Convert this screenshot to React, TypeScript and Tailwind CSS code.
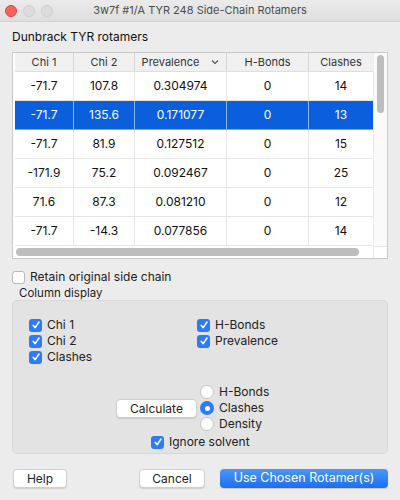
import React from 'react';

type Row = { chi1: string; chi2: string; prev: string; hb: string; cl: string };

const rows: Row[] = [
  { chi1: '-71.7', chi2: '107.8', prev: '0.304974', hb: '0', cl: '14' },
  { chi1: '-71.7', chi2: '135.6', prev: '0.171077', hb: '0', cl: '13' },
  { chi1: '-71.7', chi2: '81.9', prev: '0.127512', hb: '0', cl: '15' },
  { chi1: '-171.9', chi2: '75.2', prev: '0.092467', hb: '0', cl: '25' },
  { chi1: '71.6', chi2: '87.3', prev: '0.081210', hb: '0', cl: '12' },
  { chi1: '-71.7', chi2: '-14.3', prev: '0.077856', hb: '0', cl: '14' },
];

const colW = ['w-[59px]', 'w-[61px]', 'w-[92px]', 'w-[82px]', 'w-[64px]'];

const Check = ({ on }: { on: boolean }) =>
  on ? (
    <span className="flex h-[13px] w-[13px] shrink-0 items-center justify-center rounded-[3px] bg-[#2d7cf6]">
      <svg width="10" height="10" viewBox="0 0 10 10">
        <path d="M2.2 5.3 L4.2 7.7 L8 2" fill="none" stroke="white" strokeWidth="1.5" strokeLinecap="round" strokeLinejoin="round" />
      </svg>
    </span>
  ) : (
    <span className="h-[13px] w-[13px] shrink-0 rounded-[3px] border border-[#b9b9b9] bg-white" />
  );

const CheckRow = ({ on, label }: { on: boolean; label: string }) => (
  <div className="flex h-[16px] items-center gap-[5px]">
    <Check on={on} />
    <span>{label}</span>
  </div>
);

const Radio = ({ on, label }: { on: boolean; label: string }) => (
  <div className="flex h-[16px] items-center gap-[5px]">
    {on ? (
      <span className="flex h-[14px] w-[14px] items-center justify-center rounded-full bg-[#2d7cf6]">
        <span className="h-[5px] w-[5px] rounded-full bg-white" />
      </span>
    ) : (
      <span className="h-[14px] w-[14px] rounded-full border border-[#c4c4c4] bg-white" />
    )}
    <span>{label}</span>
  </div>
);

export default function App() {
  return (
    <div className="h-[500px] w-[400px] bg-[#ececec] text-[12px] text-[#222] [font-family:Inter,'Liberation_Sans',sans-serif]">
      {/* title bar */}
      <div className="grid h-[22px] grid-cols-[60px_1fr_60px] items-center border-b border-[#d2d2d2] bg-gradient-to-b from-[#ebebeb] to-[#dedede]">
        <div className="flex items-center gap-[6px] pl-[5px]">
          <span className="h-[12px] w-[12px] rounded-full border border-[#e0443e] bg-[#fc605c]" />
          <span className="h-[12px] w-[12px] rounded-full border border-[#cfcfcf] bg-[#dcdcdc]" />
          <span className="h-[12px] w-[12px] rounded-full border border-[#cfcfcf] bg-[#dcdcdc]" />
        </div>
        <div className="text-center text-[11px] text-[#4d4d4d]">3w7f #1/A TYR 248 Side-Chain Rotamers</div>
        <div />
      </div>

      <div className="px-[12px]">
        <div className="flex h-[29px] items-end pb-[5px] text-[12px] text-[#111]">Dunbrack TYR rotamers</div>

        {/* table */}
        <div className="mt-[1px] flex h-[207px] border border-[#c9c9c9] bg-white pl-[2px]">
          <div className="flex w-[358px] flex-col">
            <div className="flex h-[19px] border-b border-[#dedede] bg-[#f0f0f0] text-[11px] text-[#333]">
              {['Chi 1', 'Chi 2', 'Prevalence', 'H-Bonds', 'Clashes'].map((h, i) => (
                <div key={h} className={`${colW[i]} flex items-center justify-center gap-[12px] border-r border-[#d6d6d6] last:border-r-0`}>
                  <span>{h}</span>
                  {h === 'Prevalence' && (
                    <svg width="8" height="6" viewBox="0 0 8 6">
                      <path d="M1 1.5 L4 4.5 L7 1.5" fill="none" stroke="#555" strokeWidth="1.2" />
                    </svg>
                  )}
                </div>
              ))}
            </div>
            {rows.map((r, ri) => {
              const sel = ri === 1;
              return (
                <div
                  key={ri}
                  className={`flex h-[29px] border-b ${sel ? 'border-[#7aa7ee] bg-[#0b5fdd] text-white' : 'border-[#e6e6e6] text-[#111]'}`}
                >
                  {[r.chi1, r.chi2, r.prev, r.hb, r.cl].map((v, i) => (
                    <div
                      key={i}
                      className={`${colW[i]} flex items-center justify-center border-r last:border-r-0 ${sel ? 'border-[#8fb5f0]' : 'border-[#e6e6e6]'}`}
                    >
                      {v}
                    </div>
                  ))}
                </div>
              );
            })}
            <div className="flex h-[12px] items-center pl-[1px]">
              <div className="h-[8px] w-[343px] rounded-full bg-[#bdbdbd]" />
            </div>
          </div>
          <div className="flex w-[14px] flex-col border-l border-[#ececec] bg-[#fafafa]">
            <div className="flex-1 pl-[3px] pt-[2px]">
              <div className="h-[58px] w-[7px] rounded-full bg-[#bdbdbd]" />
            </div>
            <div className="h-[12px] border-t border-[#e4e4e4] bg-white" />
          </div>
        </div>

        <div className="mt-[10px] flex h-[16px] items-center gap-[5px]">
          <Check on={false} />
          <span>Retain original side chain</span>
        </div>

        <div className="mt-[2px] pl-[7px] text-[11.5px] leading-[13px]">Column display</div>

        {/* group */}
        <div className="h-[154px] rounded-[5px] border border-[#d9d9d9] bg-[#e3e3e3] pl-[16px] pt-[16px]">
          <div className="flex">
            <div className="w-[168px]">
              <CheckRow on label="Chi 1" />
              <CheckRow on label="Chi 2" />
              <CheckRow on label="Clashes" />
            </div>
            <div>
              <CheckRow on label="H-Bonds" />
              <CheckRow on label="Prevalence" />
            </div>
          </div>

          <div className="mt-[19px] flex items-center pl-[87px]">
            <button className="h-[19px] w-[81px] rounded-[4px] border border-[#cfcfcf] bg-white text-[12px] shadow-[0_1px_1px_rgba(0,0,0,0.12)]">
              Calculate
            </button>
            <div className="ml-[3px]">
              <Radio on={false} label="H-Bonds" />
              <Radio on label="Clashes" />
              <Radio on={false} label="Density" />
            </div>
          </div>

          <div className="mt-[2px] pl-[122px]">
            <CheckRow on label="Ignore solvent" />
          </div>
        </div>

        {/* buttons */}
        <div className="mt-[15px] flex items-center">
          <button className="ml-[1px] h-[19px] w-[54px] rounded-[4px] border border-[#cfcfcf] bg-white shadow-[0_1px_1px_rgba(0,0,0,0.12)]">
            Help
          </button>
          <button className="ml-[72px] h-[19px] w-[66px] rounded-[4px] border border-[#cfcfcf] bg-white shadow-[0_1px_1px_rgba(0,0,0,0.12)]">
            Cancel
          </button>
          <button className="ml-[15px] h-[19px] w-[168px] rounded-[4px] bg-gradient-to-b from-[#4a97f8] to-[#1a6ef1] text-[12.5px] text-white shadow-[0_1px_1px_rgba(0,0,0,0.15)]">
            Use Chosen Rotamer(s)
          </button>
        </div>
      </div>
    </div>
  );
}
